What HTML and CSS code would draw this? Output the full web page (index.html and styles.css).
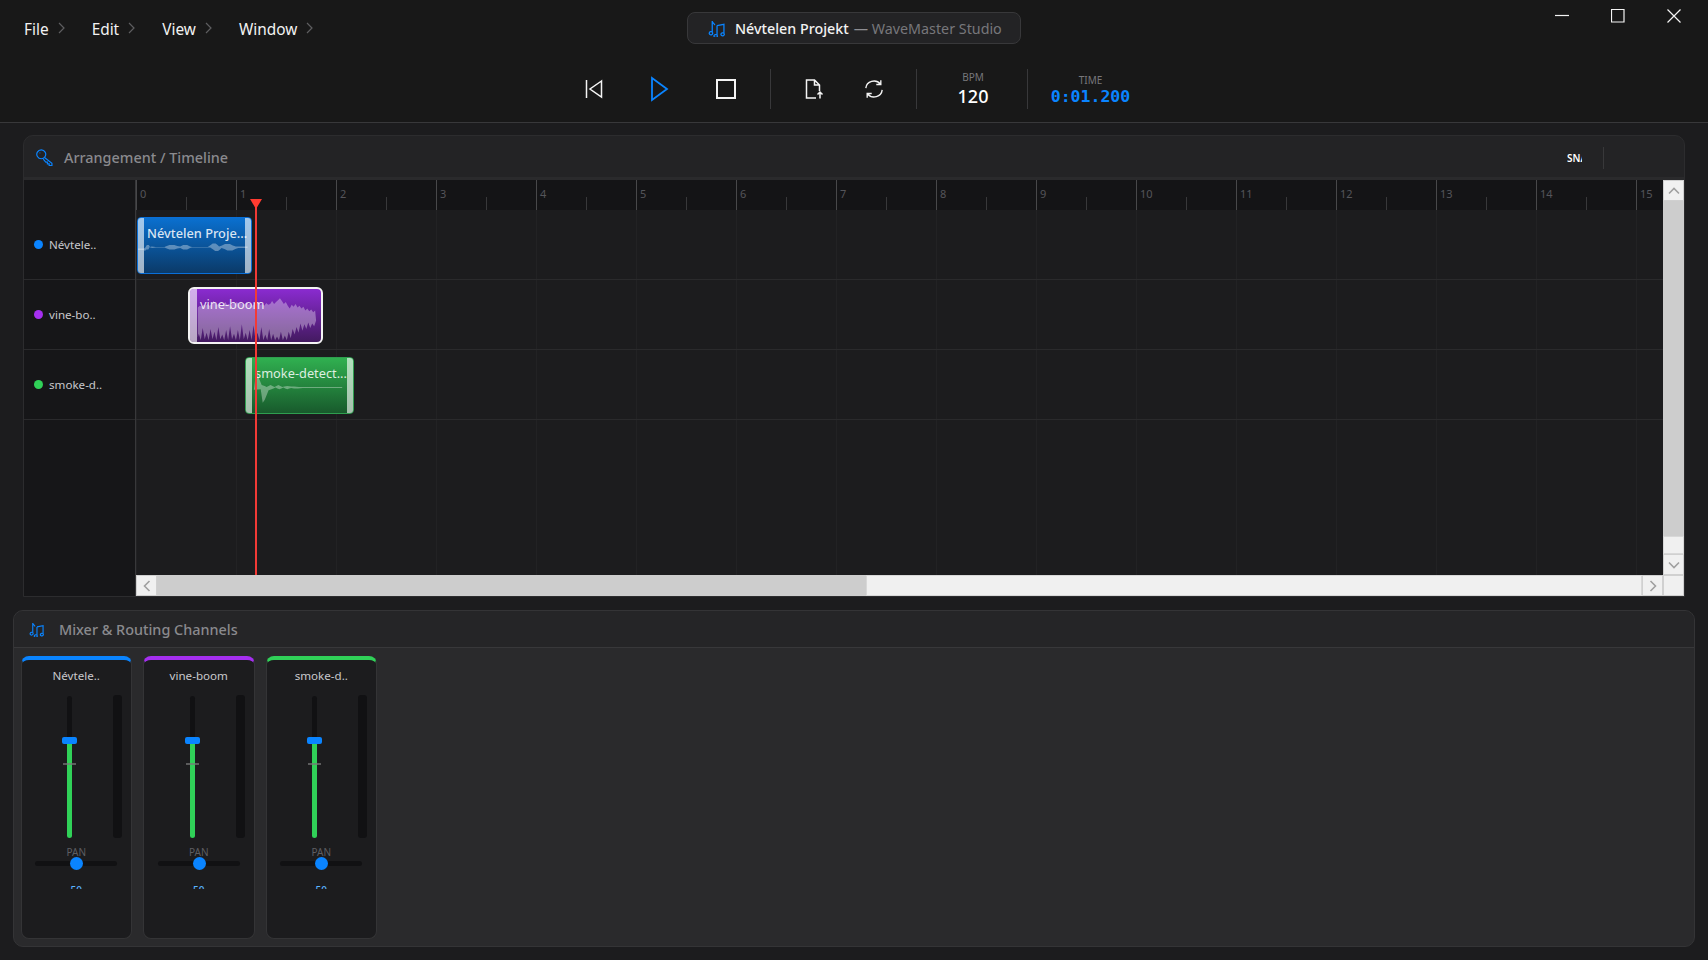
FILE: index.html
```html
<!DOCTYPE html>
<html lang="hu">
<head>
<meta charset="utf-8">
<title>Névtelen Projekt — WaveMaster Studio</title>
<link rel="stylesheet" href="styles.css">
</head>
<body>
<svg class="defs" aria-hidden="true">
  <symbol id="notes" viewBox="0 0 16 16">
    <path d="M4 1v10.500M4 1.200c.3 1.600 2 2 2.400 3.600M4 11.500a1.600 1.500 0 1 1-.1-.1M8.500 5.200 15 4v8.600M8.500 5.200v9M8.500 14.200a1.600 1.400 0 1 1-.1-.1M15 12.600a1.600 1.400 0 1 1-.1-.1" fill="none" stroke="currentColor" stroke-width="1.200"/>
  </symbol>
</svg>
<header class="topbar">
  <div class="titlerow">
    <nav class="menu">
      <div class="menu-item">File<svg class="chev" viewBox="0 0 7 12"><path d="M1 1l5 5-5 5"/></svg></div>
      <div class="menu-item">Edit<svg class="chev" viewBox="0 0 7 12"><path d="M1 1l5 5-5 5"/></svg></div>
      <div class="menu-item">View<svg class="chev" viewBox="0 0 7 12"><path d="M1 1l5 5-5 5"/></svg></div>
      <div class="menu-item">Window<svg class="chev" viewBox="0 0 7 12"><path d="M1 1l5 5-5 5"/></svg></div>
    </nav>
    <div class="pill">
      <svg class="pill-icon"><use href="#notes"/></svg>
      <span class="pill-name">Névtelen Projekt</span>
      <span class="pill-sub"><span class="pill-dash">—</span> WaveMaster Studio</span>
    </div>
    <div class="winctl">
      <svg class="wbtn" viewBox="0 0 14 14"><path d="M0 6.500h14"/></svg>
      <svg class="wbtn" viewBox="0 0 14 14"><path d="M.5.500h12.500v12.500H.5z"/></svg>
      <svg class="wbtn" viewBox="0 0 14 14"><path d="M.5.500l13 13M13.500.500l-13 13"/></svg>
    </div>
  </div>
  <div class="transport">
    <div class="tbtn"><svg class="ticon" viewBox="0 0 20 20"><path d="M2.500 1v18M17.500 2 6 10l11.500 8z"/></svg></div>
    <div class="tbtn gap-l"><svg class="ticon play" viewBox="0 0 20 26"><path d="M2 2v22l15-11z"/></svg></div>
    <div class="tbtn gap-l"><svg class="ticon stop" viewBox="0 0 20 20"><path d="M1 1h18v18H1z"/></svg></div>
    <div class="divider d1"></div>
    <div class="tbtn"><svg class="ticon" viewBox="0 0 20 20"><path d="M12 19H2.500V1h8l5 5v6M10.500 1v5h5M16 19.500V13.500M13.500 15.500l2.500-2.500 2.500 2.500"/></svg></div>
    <div class="tbtn gap-m"><svg class="ticon" viewBox="0 0 22 20"><path d="M2 9a9 8.500 0 0 1 16-4.500M20 11a9 8.500 0 0 1-16 4.500M18.500 .5v4.500h-5M3.500 19.500V15h5"/></svg></div>
    <div class="divider d2"></div>
    <div class="readout bpm"><span class="r-label">BPM</span><span class="r-value">120</span></div>
    <div class="divider"></div>
    <div class="readout time"><span class="r-label">TIME</span><span class="r-time">0:01.200</span></div>
  </div>
</header>

<main class="workspace">
  <section class="timeline">
    <div class="panel-head tl-head">
      <svg class="key" viewBox="0 0 16 16"><path d="M5 .8a4.200 4.200 0 1 1-.1 0zM8.300 8.300l6.700 5.200v2h-2.600v-1.500h-1.700v-1.700H9.200L6.800 9.600M3.400 3.600h.6"/></svg>
      <span class="panel-title">Arrangement / Timeline</span>
      <span class="snap">SNAP</span>
      <span class="head-div"></span>
    </div>
    <div class="tl-body">
      <aside class="tracklist">
        <div class="track-spacer"></div>
        <div class="track-label"><i class="dot blue"></i>Névtele..</div>
        <div class="track-label"><i class="dot purple"></i>vine-bo..</div>
        <div class="track-label"><i class="dot green"></i>smoke-d..</div>
      </aside>
      <div class="tl-main">
        <div class="ruler">
          <div class="beat">0</div><div class="beat">1</div><div class="beat">2</div><div class="beat">3</div>
          <div class="beat">4</div><div class="beat">5</div><div class="beat">6</div><div class="beat">7</div>
          <div class="beat">8</div><div class="beat">9</div><div class="beat">10</div><div class="beat">11</div>
          <div class="beat">12</div><div class="beat">13</div><div class="beat">14</div><div class="beat">15</div>
        </div>
        <div class="lanes">
          <div class="lane"></div><div class="lane"></div><div class="lane"></div>
          <div class="clip c-blue">
            <svg class="wave" viewBox="0 -2 115 56" preserveAspectRatio="none"><path d="M0 29H6l1.500-1 1.500-2.500 2 0 1.500 2.500 2 .5 4-.5H26l2-1 4-1.500h5l3 1 3 .5 3-1.500h4l3 1.500 2 .5h16l3-2 2-1.500h3l2 1.500 1.500 1.500 3-1 3-1.500h5l3 1.500 3 1h12v1.500H102l-3 1-3 1.500h-5l-3-1.500-3-1-1.500 1.500-2 1.500h-3l-2-1.500-3-2H55l-2 .5-3 1.500h-4l-3-1.500-3 .5-3 1h-5l-4-1.500-2-1H18l-4-.5-2 .5-1.500 2.500h-2L7 31.500 6 30.500H0z"/></svg>
            <span class="h h-l"></span><span class="h h-r"></span>
            <span class="clip-name strong">Névtelen Proje...</span>
          </div>
          <div class="clip c-purple">
            <svg class="wave" viewBox="0 0 134 57" preserveAspectRatio="none"><path d="M8 20L10 18 12 19 14 17 16 18 18 16 20 18 22 16 24 13 26 16 28 17 30 15 32 18 34 17 36 14 38 17 40 16 42 18 44 15 46 16 48 14 50 17 52 15 54 17 56 16 58 14 60 17 62 15 64 18 66 16 68 17 70 14 72 17 74 16 76 18 78 15 80 17 82 16 84 13 86 16 88 14 90 12 92 10 94 13 96 16 98 14 100 18 102 21 104 17 106 19 108 16 110 20 112 18 114 21 116 19 118 23 120 21 122 24 124 22 126 25 128 23 129 34 127 40 125 37 123 42 121 36 119 43 117 38 115 45 113 37 111 47 109 41 107 49 105 43 103 53 101 46 99 55 97 50 95 55 93 46 91 55 89 51 87 55 85 48 83 55 81 43 79 55 77 49 75 55 73 41 71 55 69 47 67 55 65 39 63 55 61 44 59 55 57 47 55 54 53 38 51 55 49 44 47 55 45 48 43 54 41 40 39 55 37 44 35 55 33 49 31 54 29 41 27 55 25 46 23 54 21 43 19 55 17 47 15 54 13 42 11 55 9 48 8 52z"/></svg>
            <span class="h h-l wide"></span>
            <span class="clip-name">vine-boom</span>
          </div>
          <div class="clip c-green">
            <svg class="wave" viewBox="0 -2 109 57" preserveAspectRatio="none"><path d="M8 31l2-16 2 1 2 5 2 5 3 1 2 1 2-1 2-1 2 1 2 1 2-1 2-1 2 1 2 1 2-.5 3-.5 4 .5 3 0 5 .5h44v1H58l-5 .5-4 0-3-.5-2 .5-2 1-2-1-2-1-2 1-2 1-2-1-2-1-2 1-2 1-3 1-2 5-2 5-2 3-2-14z"/></svg>
            <span class="h h-l"></span><span class="h h-r"></span>
            <span class="clip-name">smoke-detect...</span>
          </div>
        </div>
        <div class="hscroll">
          <span class="sb-btn"><svg viewBox="0 0 8 12"><path d="M6.500 1 1.500 6l5 5"/></svg></span>
          <span class="sb-thumb h-thumb"></span>
          <span class="sb-track"></span>
          <span class="sb-btn"><svg viewBox="0 0 8 12"><path d="M1.500 1l5 5-5 5"/></svg></span>
        </div>
        <div class="playhead"></div>
      </div>
      <div class="vscroll">
        <span class="sb-btn v"><svg viewBox="0 0 12 8"><path d="M1 6.500l5-5 5 5"/></svg></span>
        <span class="sb-thumb v-thumb"></span>
        <span class="sb-track"></span>
        <span class="sb-btn v"><svg viewBox="0 0 12 8"><path d="M1 1.500l5 5 5-5"/></svg></span>
        <span class="sb-corner"></span>
      </div>
    </div>
  </section>

  <section class="mixer">
    <div class="panel-head mx-head">
      <svg class="mx-icon"><use href="#notes"/></svg>
      <span class="panel-title">Mixer &amp; Routing Channels</span>
    </div>
    <div class="strips">
      <div class="strip s-blue">
        <div class="strip-name">Névtele..</div>
        <div class="strip-faders">
          <div class="fader"><span class="fill"></span><span class="tick"></span><span class="knob"></span></div>
          <div class="meter"></div>
        </div>
        <div class="pan-label">PAN</div>
        <div class="pan"><span class="pan-knob"></span></div>
        <div class="pan-value"><span>50</span></div>
      </div>
      <div class="strip s-purple">
        <div class="strip-name">vine-boom</div>
        <div class="strip-faders">
          <div class="fader"><span class="fill"></span><span class="tick"></span><span class="knob"></span></div>
          <div class="meter"></div>
        </div>
        <div class="pan-label">PAN</div>
        <div class="pan"><span class="pan-knob"></span></div>
        <div class="pan-value"><span>50</span></div>
      </div>
      <div class="strip s-green">
        <div class="strip-name">smoke-d..</div>
        <div class="strip-faders">
          <div class="fader"><span class="fill"></span><span class="tick"></span><span class="knob"></span></div>
          <div class="meter"></div>
        </div>
        <div class="pan-label">PAN</div>
        <div class="pan"><span class="pan-knob"></span></div>
        <div class="pan-value"><span>50</span></div>
      </div>
    </div>
  </section>
</main>
</body>
</html>
```
FILE: styles.css
```css
* { box-sizing: border-box; }
html, body { height: 100%; }
body {
  margin: 0;
  width: 1708px;
  height: 960px;
  overflow: hidden;
  display: flex;
  flex-direction: column;
  background: #1c1c1e;
  color: #f2f2f2;
  font-family: "Noto Sans", "Liberation Sans", sans-serif;
}
.defs { display: none; }

/* top bar */
.topbar {
  height: 123px;
  flex: none;
  background: #181818;
  border-bottom: 1px solid #38383a;
}
.titlerow {
  height: 56px;
  display: grid;
  grid-template-columns: 1fr auto 1fr;
  align-items: start;
}
.menu { display: flex; gap: 27px; padding: 19px 0 0 24px; }
.menu-item {
  display: flex;
  align-items: center;
  gap: 9px;
  font-size: 15.400px;
  line-height: 22px;
  color: #f2f2f2;
}
.chev { width: 7px; height: 12px; margin-top: -4px; fill: none; stroke: #5e5e60; stroke-width: 1.2; }
.pill {
  margin-top: 12px;
  width: 334px;
  height: 32px;
  display: flex;
  align-items: center;
  padding-left: 20px;
  background: #232325;
  border: 1px solid #38383a;
  border-radius: 8px;
  font-size: 14.300px;
}
.pill-icon { width: 17px; height: 17px; color: #0a84ff; margin-right: 10px; flex: none; }
.pill-name { font-weight: 500; color: #f2f2f2; white-space: nowrap; }
.pill-sub { color: #77777b; margin-left: 5px; white-space: nowrap; }
.pill-dash { color: #8e8e93; }
.winctl { display: flex; justify-content: flex-end; gap: 42px; padding: 9px 27px 0 0; }
.wbtn { width: 14px; height: 14px; fill: none; stroke: #f4f4f4; stroke-width: 1.2; }

.transport {
  height: 44px;
  margin-top: 11px;
  display: flex;
  justify-content: center;
  align-items: center;
  padding-left: 19px;
}
.tbtn { width: 40px; height: 40px; display: flex; align-items: center; justify-content: center; }
.gap-l { margin-left: 26px; }
.gap-m { margin-left: 20px; }
.ticon { width: 20px; height: 20px; fill: none; stroke: #f4f4f4; stroke-width: 1.500; }
.ticon.play { height: 26px; stroke: #0a84ff; stroke-width: 1.800; }
.ticon.stop { stroke-width: 2; }
.divider { width: 1px; height: 40px; background: #38383a; flex: none; }
.d1 { margin: 0 23px 0 24px; }
.d2 { margin: 0 0 0 22px; }
.readout { display: flex; flex-direction: column; align-items: center; flex: none; }
.bpm { width: 110px; padding-left: 2px; }
.time { width: 125px; padding-top: 3px; }
.r-label { font-size: 10px; line-height: 13px; color: #77777b; }
.r-value { font-size: 18px; line-height: 24px; font-weight: 500; color: #fff; }
.r-time {
  font-family: "DejaVu Sans Mono", "Liberation Mono", monospace;
  font-size: 16.500px;
  line-height: 20px;
  font-weight: 700;
  color: #0a84ff;
}

/* panels */
.workspace {
  flex: 1;
  display: flex;
  flex-direction: column;
  min-height: 0;
  padding: 12px 13px 13px;
  gap: 13px;
}
.panel-head { display: flex; align-items: center; flex: none; }
.panel-title { font-size: 14.400px; font-weight: 500; color: #8a8a8e; }

.timeline {
  height: 462px;
  margin: 0 10px;
  flex: none;
  display: flex;
  flex-direction: column;
  background: #232325;
  border: 1px solid #2c2c2e;
  border-radius: 10px 10px 0 0;
  overflow: hidden;
}
.tl-head { height: 44px; padding: 2px 0 0 12px; border-bottom: 3px solid #2a2a2c; }
.key { width: 17px; height: 17px; fill: none; stroke: #0a84ff; stroke-width: 1.100; margin-right: 11px; }
.snap {
  margin-left: auto;
  width: 15px;
  overflow: hidden;
  font-size: 10px;
  font-weight: 600;
  color: #fff;
  white-space: nowrap;
}
.head-div { width: 1px; height: 22px; background: #38383a; margin: 0 80px 0 21px; }
.tl-body { flex: 1; display: flex; min-height: 0; }

.tracklist { width: 112px; flex: none; background: #161618; border-right: 1px solid #38383a; }
.track-spacer { height: 30px; }
.track-label {
  height: 70px;
  display: flex;
  align-items: center;
  gap: 6px;
  padding-left: 10px;
  border-bottom: 1px solid #2a2a2c;
  font-size: 11.600px;
  color: #c8c8cc;
}
.dot { width: 9px; height: 9px; border-radius: 50%; }
.blue { background: #0a84ff; }
.purple { background: #a52ff0; }
.green { background: #30d158; }

.tl-main { flex: 1; min-width: 0; display: flex; flex-direction: column; position: relative; }
.ruler { height: 30px; flex: none; display: flex; background: #141416; overflow: hidden; }
.beat {
  width: 100px;
  flex: none;
  position: relative;
  padding: 6px 0 0 3px;
  font-size: 11px;
  line-height: 16px;
  color: #55555a;
  border-left: 1px solid #48484a;
}
.beat::after {
  content: "";
  position: absolute;
  left: 49px;
  bottom: 0;
  height: 13px;
  width: 1px;
  background: #38383a;
}
.lanes {
  flex: 1;
  position: relative;
  background-color: #1c1c1e;
  background-image: linear-gradient(to right, #222224 1px, transparent 1px);
  background-size: 100px 100%;
}
.lane { height: 70px; border-bottom: 1px solid #2a2a2c; }

.clip { position: absolute; border-radius: 4px; overflow: hidden; border: 1px solid; }
.c-blue { left: 1px; top: 7px; width: 115px; height: 57px; border-color: #0a6fd8; background: linear-gradient(#0a70d0, #0b3a68); }
.c-purple { left: 52px; top: 77px; width: 135px; height: 57px; border: 2px solid #f4f4f4; border-radius: 6px; background: linear-gradient(#8a2bd0, #431a60); }
.c-green { left: 109px; top: 147px; width: 109px; height: 57px; border-color: #2f9e4f; background: linear-gradient(#30b050, #185a2c); }
.wave { position: absolute; left: 0; top: 0; width: 100%; height: 100%; fill: rgba(255, 255, 255, .34); }
.h { position: absolute; top: 0; bottom: 0; width: 6px; background: rgba(255, 255, 255, .62); }
.h-l { left: 0; }
.h-r { right: 0; }
.h.wide { width: 7px; }
.clip-name {
  position: absolute;
  left: 9px;
  top: 6px;
  font-size: 12.800px;
  line-height: 18px;
  color: rgba(255, 255, 255, .85);
  white-space: nowrap;
}
.clip-name.strong { font-weight: 500; }
.c-purple .clip-name { left: 10px; top: 6px; }

.playhead {
  position: absolute;
  left: 119px;
  top: 19px;
  bottom: 21px;
  width: 2px;
  background: #f23a36;
}
.playhead::before {
  content: "";
  position: absolute;
  left: -5px;
  top: 0;
  border-left: 6px solid transparent;
  border-right: 6px solid transparent;
  border-top: 10px solid #ff3b30;
}

/* scrollbars */
.hscroll { height: 21px; flex: none; display: flex; background: #f0f0f0; }
.vscroll { width: 21px; flex: none; display: flex; flex-direction: column; background: #f0f0f0; }
.sb-btn {
  width: 21px;
  height: 21px;
  flex: none;
  display: flex;
  align-items: center;
  justify-content: center;
  background: #f0f0f0;
  border: 1px solid #d0d0d0;
}
.sb-btn svg { width: 8px; height: 12px; fill: none; stroke: #a0a0a0; stroke-width: 1.600; }
.sb-btn.v svg { width: 12px; height: 8px; }
.sb-thumb { background: #cdcdcd; flex: none; }
.h-thumb { width: 709px; }
.v-thumb { height: 335px; }
.sb-track { flex: 1; background: #f0f0f0; box-shadow: inset 0 0 0 1px #d8d8d8; }
.sb-corner { height: 21px; flex: none; background: #f0f0f0; border: 1px solid #d0d0d0; }

/* mixer */
.mixer {
  flex: 1;
  min-height: 0;
  display: flex;
  flex-direction: column;
  background: #2a2a2c;
  border: 1px solid #343436;
  border-radius: 10px;
  overflow: hidden;
}
.mx-head { height: 37px; padding-left: 15px; background: #252527; border-bottom: 1px solid #38383a; }
.mx-icon { width: 15px; height: 15px; color: #0a84ff; margin-right: 15px; }
.strips { flex: 1; display: flex; gap: 11px; padding: 8px 7px 8px 6.500px; }
.strip {
  width: 111.500px;
  height: 283px;
  display: flex;
  flex-direction: column;
  background: #1c1c1e;
  border: 1px solid #343436;
  border-top: 4px solid;
  border-radius: 8px;
}
.s-blue { border-top-color: #0a84ff; }
.s-purple { border-top-color: #a52ff0; }
.s-green { border-top-color: #30d158; }
.strip-name { height: 34px; padding-top: 6px; text-align: center; font-size: 11.600px; line-height: 20px; color: #c8c8cc; }
.strip-faders { height: 145px; display: flex; justify-content: space-between; padding: 2px 9px 0 45.500px; }
.fader { position: relative; width: 5px; height: 142px; background: #111113; border-radius: 3px; }
.fill { position: absolute; left: 0; right: 0; top: 44px; bottom: 0; background: #30d158; border-radius: 0 0 3px 3px; }
.tick { position: absolute; left: -4px; width: 13px; top: 67px; height: 2px; background: rgba(120, 120, 120, .7); }
.knob { position: absolute; left: -5px; top: 41px; width: 15px; height: 7px; background: #0a84ff; border-radius: 2px; }
.meter { width: 9px; height: 143px; margin-top: -1px; background: #111113; border-radius: 3px; }
.pan-label { margin-top: 7px; text-align: center; font-size: 10px; line-height: 13px; color: #5e5e62; }
.pan { position: relative; width: 82px; height: 5px; margin: 2px auto 0; background: #111113; border-radius: 3px; }
.pan-knob { position: absolute; left: 35px; top: -4px; width: 13px; height: 13px; border-radius: 50%; background: #0a84ff; }
.pan-value { height: 23px; overflow: hidden; text-align: center; font-size: 10px; line-height: 14px; color: #5ab4ff; font-weight: 500; }
.pan-value span { display: block; padding-top: 17px; }
```
